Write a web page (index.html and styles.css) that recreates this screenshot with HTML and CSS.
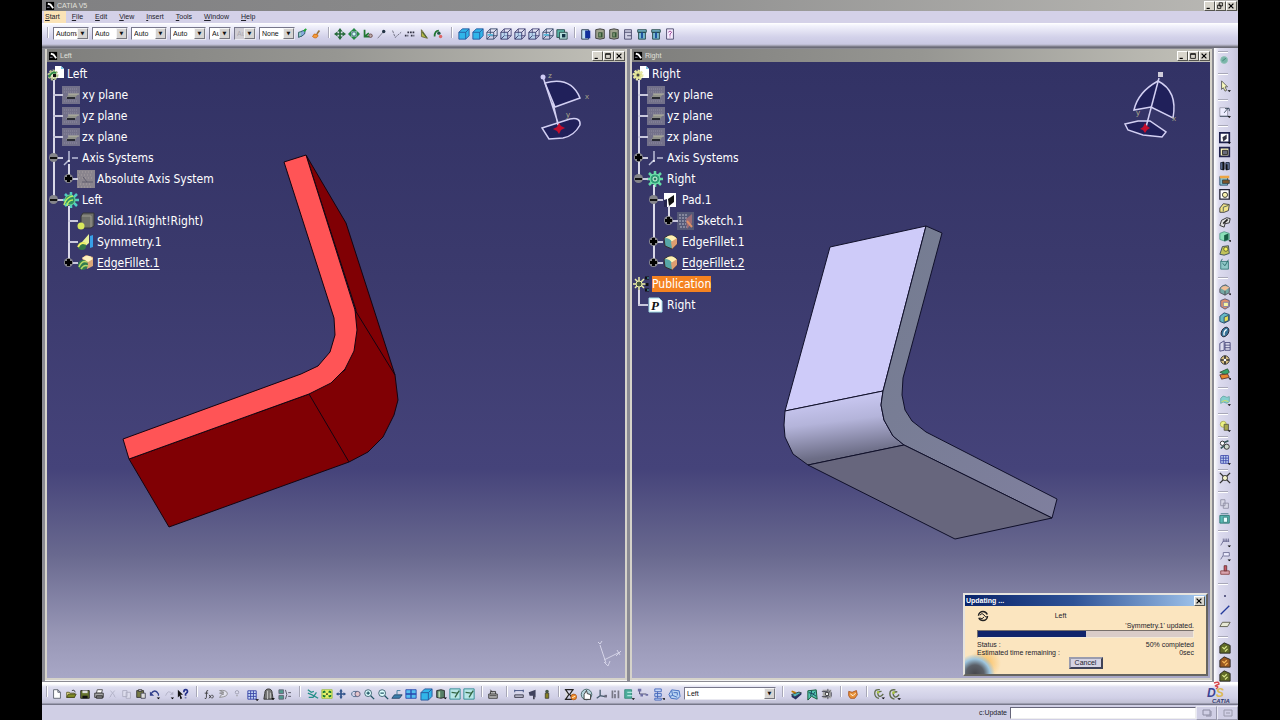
FILE: index.html
```html
<!DOCTYPE html>
<html lang="en">
<head>
<meta charset="utf-8">
<title>CATIA V5</title>
<link rel="stylesheet" href="styles.css">
</head>
<body>
<svg class="defs" aria-hidden="true">
  <defs>
    <linearGradient id="fillet" x1="0.4" y1="0" x2="0.6" y2="1"><stop offset="0" stop-color="#cfcdf8"/><stop offset=".4" stop-color="#b4b4da"/><stop offset=".85" stop-color="#6c6d86"/><stop offset="1" stop-color="#666679"/></linearGradient>
    <linearGradient id="side" x1="0" y1="0" x2="1" y2="1"><stop offset="0" stop-color="#747c90"/><stop offset="1" stop-color="#7f7f9e"/></linearGradient>
  </defs>
  <symbol id="app" viewBox="0 0 10 10"><path fill="#000" d="M0 1h9v9H0z"/><path d="M2 3l3 1 3 4" stroke="#fff" stroke-width="2" fill="none"/><path d="M1 7h3" stroke="#99a"/></symbol>
  <symbol id="link" viewBox="0 0 14 14"><path d="M3 5l4-1v5l-4 2z" fill="#9cc" stroke="#255"/><path d="M6 4l5-2-1 5-4 3" fill="#8ad" stroke="#256"/><path d="M9 4l3-3" stroke="#2a3" stroke-width="2"/></symbol>
  <symbol id="brush" viewBox="0 0 14 14"><path d="M3 10c3 3 7 1 6-2L5 7z" fill="#f49a3c" stroke="#c60"/><path d="M8 7l3-4" stroke="#974" stroke-width="2"/></symbol>
  <symbol id="gmove" viewBox="0 0 14 14"><path d="M7 2v10M2 7h10" stroke="#276b3c" stroke-width="2"/><path d="M7 0l3 4H4zM7 14l3-4H4zM0 7l4-3v6zM14 7l-4-3v6z" fill="#276b3c"/></symbol>
  <symbol id="gmove2" viewBox="0 0 14 14"><path d="M7 0l4 4H3zM7 14l4-4H3zM0 7l4-4v8zM14 7l-4-4v8z" fill="#258a45"/><circle cx="7" cy="7" r="2.500" fill="#cfe" stroke="#357"/></symbol>
  <symbol id="snap" viewBox="0 0 14 14"><path d="M3 2v8h6M3 10l5-4" stroke="#273" fill="none" stroke-width="2"/><circle cx="10" cy="9" r="2" fill="#baa" stroke="#644"/></symbol>
  <symbol id="node" viewBox="0 0 14 14"><path d="M2 12l7-8" stroke="#778"/><circle cx="9" cy="4" r="2" fill="#234"/></symbol>
  <symbol id="dash" viewBox="0 0 14 14"><path d="M3 3l3 8 7-6" stroke="#667" fill="none" stroke-dasharray="3 1"/></symbol>
  <symbol id="span" viewBox="0 0 14 14"><path d="M1 9h4M8 9h4M4 5h8" stroke="#334" stroke-width="2" stroke-dasharray="2 1"/></symbol>
  <symbol id="key" viewBox="0 0 14 14"><path d="M4 2v8l7 2-4-6z" fill="#b6ba45" stroke="#663"/><path d="M5 5l5 6" stroke="#243"/></symbol>
  <symbol id="dots" viewBox="0 0 14 14"><path d="M3 10c0-6 3-7 5-7" stroke="#273" stroke-width="2" fill="none"/><circle cx="8" cy="6" r="2" fill="#254"/><circle cx="10" cy="10" r="2" fill="#d66"/></symbol>
  <symbol id="cube" viewBox="0 0 14 14"><path d="M1 5h8v8H1zM1 5l4-4h8v8l-4 4M9 5l4-4" fill="#31b5e9" stroke="#27579d"/></symbol>
  <symbol id="cubew" viewBox="0 0 14 14"><path d="M5 1h8v8H5z" fill="none" stroke="#447"/><path d="M1 5h8v8H1zM1 5l4-4M9 5l4-4M9 13l4-4M1 13l4-4" fill="#9fd3f0" fill-opacity=".5" stroke="#336"/></symbol>
  <symbol id="cubeo" viewBox="0 0 14 14"><path d="M5 1h8v8H5zM1 5h8v8H1zM1 5l4-4M9 5l4-4M9 13l4-4M1 13l4-4" fill="none" stroke="#346"/><path d="M2 8h6" stroke="#5bd" stroke-width="2"/></symbol>
  <symbol id="iso" viewBox="0 0 14 14"><path d="M1 2h9v9H1z" fill="#5bb9a9" stroke="#244"/><path d="M4 5h9v8H4z" fill="#b5ddda" stroke="#244"/><path d="M7 7h4v4H7z" fill="#134"/></symbol>
  <symbol id="cylb" viewBox="0 0 14 14"><path d="M2 2h8v11H2z" fill="#bfe0f2" stroke="#234"/><path d="M6 3h6v9H6z" fill="#12309b"/></symbol>
  <symbol id="cylg" viewBox="0 0 14 14"><path d="M2 2l5-1 5 1v10l-5 1-5-1z" fill="#9ea28e" stroke="#333"/><path d="M5 5h5v6H5z" fill="#353"/><path d="M7 6v4" stroke="#cdb"/></symbol>
  <symbol id="cylw" viewBox="0 0 14 14"><path d="M3 2h8v11H3zM3 5h8M6 9h5" fill="#cfcfe4" stroke="#446"/></symbol>
  <symbol id="cylc" viewBox="0 0 14 14"><path d="M2 2h10v3H2zM3 5h8v8H3z" fill="#78b9ce" stroke="#244"/><path d="M7 5v7" stroke="#14469a" stroke-width="2"/></symbol>
  <symbol id="help" viewBox="0 0 14 14"><path d="M3 1h8v12H3z" fill="#f6ecff" stroke="#446"/><path d="M5 5q2-3 4 0l-2 2v2M7 10v1" stroke="#93368a" fill="none"/></symbol>
  <symbol id="page" viewBox="0 0 14 14"><path d="M3 2h5l3 3v7H3zM8 2v3h3" fill="#fff" stroke="#555b68"/></symbol>
  <symbol id="open" viewBox="0 0 14 14"><path d="M2 11V5h3l1 1h5v5z" fill="#f8ee96" stroke="#552"/><path d="M2 11l2-4h9l-2 4z" fill="#808c24" stroke="#442"/><path d="M8 3q3-2 4 2" fill="none" stroke="#333"/></symbol>
  <symbol id="save" viewBox="0 0 14 14"><path d="M2 3h10v9H2z" fill="#67752e" stroke="#222"/><path d="M4 3h6v3H4z" fill="#ddd"/><path d="M4 9h6v3H4z" fill="#111"/></symbol>
  <symbol id="print" viewBox="0 0 14 14"><path d="M5 2h6l-1 4H4z" fill="#fff" stroke="#444"/><path d="M2 6h10v5H2z" fill="#aaa" stroke="#333"/><path d="M4 9h7v3H4z" fill="#777" stroke="#333"/></symbol>
  <symbol id="cut" viewBox="0 0 14 14"><path d="M4 3l5 6M9 3L4 9M3 11l2-2M10 11L8 9" stroke="#b0b0c4" fill="none"/></symbol>
  <symbol id="copy" viewBox="0 0 14 14"><path d="M2 3h5v7H2zM6 5h5v7H6z" fill="#dddded" stroke="#acacc0"/></symbol>
  <symbol id="paste" viewBox="0 0 14 14"><path d="M2 3h8v8H2z" fill="#767a46" stroke="#333"/><path d="M4 2h4v2H4z" fill="#ccc" stroke="#333"/><path d="M7 6h5v6H7z" fill="#ddd" stroke="#445"/></symbol>
  <symbol id="undo" viewBox="0 0 14 14"><path d="M2 7q5-7 9 0v2" fill="none" stroke="#313f8b" stroke-width="1.5"/><path d="M1 4v5h5z" fill="#313f8b"/><path d="M9 11h4l-2 2z"/></symbol>
  <symbol id="redo" viewBox="0 0 14 14"><path d="M3 9q3-8 8-2" fill="none" stroke="#b0b0c4"/><path d="M12 4v4H8z" fill="#b0b0c4"/><path d="M9 11h4l-2 2z"/></symbol>
  <symbol id="what" viewBox="0 0 14 14"><path d="M1 2l6 6H4l2 4-2 1-1-4-2 2z" fill="#111"/><path d="M8 5q0-3 2-3 3 0 2 3l-2 2v2M10 11v1" stroke="#24318a" stroke-width="2" fill="none"/></symbol>
  <symbol id="fx" viewBox="0 0 14 14"><path d="M6 3q-2-1-2 3v5q0 2-2 1M2 6h4M7 8l3 4M10 8l-3 4M11 8q2 2 0 4" stroke="#333" fill="none"/></symbol>
  <symbol id="msg" viewBox="0 0 14 14"><path d="M3 3q8-1 9 3t-9 5l2-3 3-1-5-1 5-1z" fill="#e3e3ee" stroke="#888"/></symbol>
  <symbol id="bulb" viewBox="0 0 14 14"><circle cx="7" cy="5" r="2" fill="#dde" stroke="#9a9aad"/><path d="M6 9h2" stroke="#999"/></symbol>
  <symbol id="grid" viewBox="0 0 14 14"><path d="M2 3h9v9H2z" fill="#c9dcf7"/><path d="M2 3v9M5 3v9M8 3v9M11 3v9M2 3h9M2 6h9M2 9h9M2 12h9" stroke="#3944a8"/><path d="M10 12h4l-2 2z"/></symbol>
  <symbol id="lock" viewBox="0 0 14 14"><path d="M3 6q0-5 4-5t4 5l1 6H2z" fill="#777" stroke="#333"/><path d="M6 3v9M9 5v6" stroke="#ccc"/><path d="M10 11h4l-2 2z"/></symbol>
  <symbol id="law" viewBox="0 0 14 14"><path d="M1 2h5v4H1zM1 8h5v4H1z" fill="#51988e" stroke="#667"/><path d="M8 2q3 5 0 10M11 5h3M11 9h3" fill="none" stroke="#556"/></symbol>
  <symbol id="fly" viewBox="0 0 14 14"><path d="M1 2l4 3 3-1M1 6l5 2 7 4M2 11h5l4-6" stroke="#27908a" stroke-width="1.5" fill="none"/></symbol>
  <symbol id="fit" viewBox="0 0 14 14"><path d="M1 2h12v10H1z" fill="#e7f26a" stroke="#9b4"/><path d="M4 3L2 4v2l4-1zM10 3l2 1v2L8 5zM4 11l-2-1V8l4 1zM10 11l2-1V8L8 9z" fill="#173"/><circle cx="7" cy="7" r="1"/></symbol>
  <symbol id="pan" viewBox="0 0 14 14"><path d="M7 3v8M3 7h8" stroke="#31548b" stroke-width="2"/><path d="M7 1l2 3H5zM7 13l2-3H5zM1 7l3-2v4zM13 7l-3-2v4z" fill="#31548b"/></symbol>
  <symbol id="rot" viewBox="0 0 14 14"><path d="M10 4H5q-4 3 0 6h5" stroke="#468" fill="none"/><circle cx="10" cy="7" r="3" fill="#e5c5cb" stroke="#557"/></symbol>
  <symbol id="zin" viewBox="0 0 14 14"><circle cx="6" cy="6" r="4" fill="#dff" stroke="#356"/><path d="M9 9l4 4M4 6h4M6 4v4" stroke="#256" stroke-width="1.5"/></symbol>
  <symbol id="zout" viewBox="0 0 14 14"><circle cx="6" cy="6" r="4" fill="#dff" stroke="#356"/><path d="M9 9l4 4M4 6h4" stroke="#256" stroke-width="1.5"/></symbol>
  <symbol id="norm" viewBox="0 0 14 14"><path d="M1 12l3-4h9l-3 4z" fill="#3a7fac" stroke="#246"/><path d="M7 9V3h4" stroke="#379" fill="none"/></symbol>
  <symbol id="multi" viewBox="0 0 14 14"><path d="M1 2h12v10H1z" fill="#55bff0" stroke="#2846ac"/><path d="M7 2v10M1 7h12" stroke="#2846ac" stroke-width="1.500"/></symbol>
  <symbol id="cyld" viewBox="0 0 14 14"><path d="M2 3l5-1 4 1v8l-4 1-5-1z" fill="#557e66" stroke="#222"/><path d="M5 4v7" stroke="#bbd8b0" stroke-width="2"/><path d="M10 11h4l-2 2z"/></symbol>
  <symbol id="hide" viewBox="0 0 14 14"><path d="M1 1h12v12H1z" fill="#b7e6e6" stroke="#27858e"/><path d="M3 5l7 1-3 5M10 6l2-3" stroke="#364" stroke-width="1.500" fill="none"/></symbol>
  <symbol id="cam" viewBox="0 0 14 14"><path d="M2 7h10v5H2zM4 7V4h6v3" fill="#bbb" stroke="#333"/><path d="M4 2l2 3M3 9h8" stroke="#333"/></symbol>
  <symbol id="meas" viewBox="0 0 14 14"><path d="M2 3h10M2 5V2M12 5V2" stroke="#347" fill="none"/><path d="M2 8h10v3H2z" fill="#bbc" stroke="#334"/></symbol>
  <symbol id="horn" viewBox="0 0 14 14"><path d="M2 5l8-3v9L7 9H3z" fill="#41435d"/><path d="M8 9v4" stroke="#445" stroke-width="2"/></symbol>
  <symbol id="man" viewBox="0 0 14 14"><circle cx="7" cy="4" r="2" fill="#454"/><path d="M5 6h4v6H5z" fill="#89811f" stroke="#443"/></symbol>
  <symbol id="hour" viewBox="0 0 16 16"><path d="M1 2h11M1 14h9M2 2l4 6-4 6M11 2L7 8l3 4" stroke="#222" stroke-width="1.5" fill="#ddd"/><circle cx="12" cy="11" r="3.500" fill="#ee8d27" stroke="#a52"/><path d="M10 12l4-2" stroke="#fff"/></symbol>
  <symbol id="hand" viewBox="0 0 16 16"><circle cx="8" cy="8" r="6.500" fill="#b6d5dd" stroke="#355"/><path d="M5 14V8l3-5 1 4 4 1v6z" fill="#fff" stroke="#222"/></symbol>
  <symbol id="axis" viewBox="0 0 14 14"><path d="M6 2v7l6 1M6 9l-4 3" fill="none" stroke="#44596b" stroke-width="1.500"/><path d="M11 8h3v3h-3z" fill="#6a6a7c"/></symbol>
  <symbol id="bars" viewBox="0 0 14 14"><path d="M4 3v9M7 3v2m0 2v5M11 3v9" stroke="#777785" stroke-width="2"/></symbol>
  <symbol id="gbox" viewBox="0 0 14 14"><path d="M2 2h8v10H2z" fill="#4cae9c" stroke="#387"/><path d="M5 5h6M5 9h6" stroke="#dff"/><path d="M10 12h4l-2 2z"/></symbol>
  <symbol id="branch" viewBox="0 0 14 14"><path d="M3 3v4h8" stroke="#446" fill="none"/><path d="M1 1h4v3H1zM4 7h3v3H4zM10 7h3v2h-3z" fill="#6e6fa5"/></symbol>
  <symbol id="tree" viewBox="0 0 14 14"><path d="M3 1h7v3H3zM3 6h7v3H3zM3 11h7v2H3zM6 4v7" fill="#c7d9f8" stroke="#4668bb"/><path d="M11 11h4l-2 2z"/></symbol>
  <symbol id="body" viewBox="0 0 14 14"><path d="M4 2l8 1 1 6-3 3-7-1-2-4z" fill="#b9d4f3" stroke="#426dbd"/><path d="M4 3l1 5 5 2M5 8l-3 1M6 5h4v3" fill="none" stroke="#426dbd"/></symbol>
  <symbol id="block" viewBox="0 0 16 16"><path d="M2 8l9-3 3 1-8 5z" fill="#50b3bb" stroke="#233"/><path d="M2 8v3l5 3 7-6V6l-8 5z" fill="#252f62"/><path d="M2 4l5 2" stroke="#b70" stroke-width="2"/></symbol>
  <symbol id="web" viewBox="0 0 14 14"><path d="M2 3l9-1 1 10-6-3-4 4z" fill="#55c7b1" stroke="#153"/><path d="M3 5l4 1 4 3M6 3l-1 6M10 4L7 8" stroke="#113d55" fill="none"/></symbol>
  <symbol id="star" viewBox="0 0 14 14"><path d="M2 2h10v10H2z" fill="#aaa"/><path d="M1 4h6M1 10h6M8 1v12M4 4l6 6M11 3l-6 8M12 5v5" stroke="#454554"/><circle cx="7" cy="7" r="2" fill="#eee" stroke="#333"/></symbol>
  <symbol id="mug" viewBox="0 0 14 14"><path d="M2 4l4 1 5-2 1 5-3 4H4L2 9z" fill="#e89239" stroke="#a74e18"/><path d="M4 7l3 2 3-3" stroke="#fff" fill="none"/></symbol>
  <symbol id="coil" viewBox="0 0 14 14"><path d="M8 2q-6-1-6 4t5 6M10 4Q4 4 6 8t6-1" fill="none" stroke="#606d4d" stroke-width="1.500"/><circle cx="6" cy="5" r="1.500" fill="#a9c541"/><path d="M10 11h4l-2 2z"/></symbol>
  <symbol id="gdot" viewBox="0 0 14 14"><circle cx="6" cy="7" r="4" fill="#79b4a9" stroke="#8fc2b5"/><path d="M4 8l4-3" stroke="#398270"/></symbol>
  <symbol id="cursor" viewBox="0 0 14 14"><path d="M3 1l7 7H7l2 4-2 1-2-4-2 2z" fill="#f8f9bd" stroke="#555"/><path d="M10 12h4l-2 2z"/></symbol>
  <symbol id="sketch" viewBox="0 0 14 14"><path d="M1 2h9v10H1z" fill="#eef" stroke="#99a"/><path d="M1 12h11M6 8l5-6M7 3h5v3" stroke="#345" fill="none"/><path d="M10 12h4l-2 2z"/></symbol>
  <symbol id="pad" viewBox="0 0 14 14"><path d="M1 1h11v11H1z" fill="#fff" stroke="#1c1f4b" stroke-width="2"/><path d="M4 6l5-3v5l-4 3z" fill="#334"/><path d="M10 12h4l-2 2z"/></symbol>
  <symbol id="pocket" viewBox="0 0 14 14"><path d="M1 2h11v10H1z" fill="#fff9be" stroke="#20224c" stroke-width="2"/><path d="M4 5h6v5H4z" fill="#686a7a" stroke="#222"/></symbol>
  <symbol id="shaft" viewBox="0 0 14 14"><path d="M2 3h4v8H2zM8 3h4v8H8z" fill="#65779d" stroke="#172139"/><path d="M5 2v10M9 5v7" stroke="#111" stroke-width="2"/></symbol>
  <symbol id="groove" viewBox="0 0 14 14"><path d="M1 3h9v10H1z" fill="#8bc3cf" stroke="#246"/><path d="M1 2h11v3H1z" fill="#eda544"/><path d="M4 7h8v4H4z" fill="#7d552b" stroke="#344"/></symbol>
  <symbol id="hole" viewBox="0 0 14 14"><path d="M1 2h11v11H1z" fill="#fff" stroke="#223" stroke-width="1.500"/><circle cx="7" cy="8" r="3" fill="#f8f1ad" stroke="#222"/></symbol>
  <symbol id="rib" viewBox="0 0 14 14"><path d="M1 12V7l4-5 7 1-1 7-5 2z" fill="#f1e38a" stroke="#333"/><path d="M5 11V6l6-2" stroke="#455" fill="none"/></symbol>
  <symbol id="slot" viewBox="0 0 14 14"><path d="M1 11l2-6 6-3 4 1-1 5-5 1-1 4z" fill="#dfdfdf" stroke="#222"/><path d="M5 9l5-5" stroke="#222" stroke-width="2"/></symbol>
  <symbol id="gcube" viewBox="0 0 14 14"><path d="M1 4l5-2 6 2v7l-5 2-6-2z" fill="#8ae0b8" stroke="#598"/><path d="M6 6l5-2v7l-5 2z" fill="#185c44"/><path d="M11 12h4l-2 2z"/></symbol>
  <symbol id="ycube" viewBox="0 0 14 14"><path d="M1 12l3-9 7-1 1 9-6 2z" fill="#c1c25a" stroke="#345"/><circle cx="8" cy="6" r="2.500" fill="#f8f55b" stroke="#553"/></symbol>
  <symbol id="tcube" viewBox="0 0 14 14"><path d="M2 4h9v9H2z" fill="#8fc7c7" stroke="#377"/><path d="M4 6l3 3 4-7M2 4l2-3" stroke="#266" fill="none"/></symbol>
  <symbol id="fil" viewBox="0 0 14 14"><path d="M1 6q1-4 7-5l4 3v6l-5 3-6-3z" fill="#75a9a5" stroke="#53505e"/><path d="M2 5q4-5 10-1L7 8z" fill="#f2be95"/><path d="M7 8v5" stroke="#444"/><path d="M11 11h4l-2 2z"/></symbol>
  <symbol id="cham" viewBox="0 0 14 14"><path d="M2 3l5-2 5 2v7l-5 3-5-3z" fill="#e0916b" stroke="#557"/><path d="M5 5h6v5H5z" fill="#f7f3a0" stroke="#77a"/></symbol>
  <symbol id="draft" viewBox="0 0 14 14"><path d="M1 5l5-4 6 2v7l-6 3-5-2z" fill="#67b9c3" stroke="#246"/><path d="M6 6l5-2v6l-5 2z" fill="#e8df55" stroke="#246"/></symbol>
  <symbol id="shell" viewBox="0 0 14 14"><ellipse cx="7" cy="7" rx="4" ry="6" fill="#37759a" stroke="#223" transform="rotate(30 7 7)"/><path d="M6 11q-1-5 3-7" stroke="#fff" fill="none" stroke-width="1.500"/></symbol>
  <symbol id="thick" viewBox="0 0 14 14"><path d="M1 4l5-3v11l-5 1zM7 3h6v9H7zM7 6h6M7 9h6" fill="#dde" stroke="#447"/></symbol>
  <symbol id="thread" viewBox="0 0 14 14"><circle cx="7" cy="7" r="5" fill="#d8bf80" stroke="#333"/><path d="M7 2v10M2 7h10" stroke="#333" stroke-width="2"/><circle cx="7" cy="7" r="1.500" fill="#fff"/></symbol>
  <symbol id="repl" viewBox="0 0 14 14"><path d="M1 5l9-4 2 4-4 3z" fill="#36a46c" stroke="#353"/><path d="M1 8l9-1 2 4-9 2z" fill="#e8872e" stroke="#533"/><path d="M11 12h4l-2 2z"/></symbol>
  <symbol id="surf" viewBox="0 0 14 14"><path d="M2 5q3-4 5-2t5 0v6q-3 3-5 1t-5 1z" fill="#85cfd0" stroke="#68a7a4"/><path d="M3 9q4-3 8 0" stroke="#dd5" fill="none"/><path d="M10 12h4l-2 2z"/></symbol>
  <symbol id="bool" viewBox="0 0 14 14"><circle cx="5" cy="5" r="3.500" fill="#eef484" stroke="#aa5"/><path d="M6 5h5v7H6z" fill="#a8a84d" stroke="#554"/><path d="M10 12h4l-2 2z"/></symbol>
  <symbol id="balls" viewBox="0 0 14 14"><circle cx="4" cy="5" r="2.500" fill="#fff" stroke="#222"/><circle cx="9" cy="9" r="3" fill="#cdd9cb" stroke="#222"/><path d="M6 4l5-2M2 11l4-3" stroke="#355" stroke-width="2"/></symbol>
  <symbol id="scale" viewBox="0 0 14 14"><circle cx="7" cy="7" r="3" fill="#f4f3c6" stroke="#333"/><path d="M1 1l4 4M13 1L9 5M1 13l4-4M13 13L9 9" stroke="#333" stroke-width="1.500"/></symbol>
  <symbol id="boxes" viewBox="0 0 14 14"><path d="M2 2h5v7H2zM5 6h6v6H5z" fill="#d7d7e6" stroke="#8d8da3"/></symbol>
  <symbol id="tbox" viewBox="0 0 14 14"><path d="M1 4h11v9H1z" fill="#59b8b4" stroke="#28736e"/><path d="M5 6h5v6H5z" fill="#e6ffff" stroke="#377"/><path d="M2 2h9" stroke="#478"/></symbol>
  <symbol id="note" viewBox="0 0 14 14"><path d="M2 11l3-5h7M5 3v4M7 3v4M9 3v4M11 3v4" stroke="#67678f" fill="none"/><path d="M10 11h4l-2 2z"/></symbol>
  <symbol id="flag" viewBox="0 0 14 14"><path d="M2 11l3-5V3h7v4H5" stroke="#67678f" fill="#eef"/><path d="M10 11h4l-2 2z"/></symbol>
  <symbol id="stamp" viewBox="0 0 14 14"><path d="M2 8h10v4H2z" fill="#d9a4ae" stroke="#844"/><path d="M6 2h3v6H6z" fill="#c56" stroke="#633"/></symbol>
  <symbol id="point" viewBox="0 0 14 14"><path d="M6 6h2v2H6z" fill="#225"/></symbol>
  <symbol id="line" viewBox="0 0 14 14"><path d="M2 12L12 2" stroke="#233a9b" stroke-width="1.500"/></symbol>
  <symbol id="plane" viewBox="0 0 14 14"><path d="M1 10l3-5h9l-3 5z" fill="#e7e9d5" stroke="#554"/></symbol>
  <symbol id="rock" viewBox="0 0 14 14"><path d="M1 13V5l5-4 7 3v9z" fill="#606a28" stroke="#222"/><path d="M4 6l2 2 3-3M7 11l3-3" stroke="#d9e68a" stroke-width="1.500" fill="none"/></symbol>
  <symbol id="rocko" viewBox="0 0 14 14"><path d="M1 13V5l5-4 7 3v9z" fill="#9a5921" stroke="#222"/><path d="M4 6l2 2 3-3M7 11l3-3" stroke="#f9b95a" stroke-width="1.500" fill="none"/></symbol>
  <symbol id="minimize" viewBox="0 0 10 10"><path d="M2 8h4" stroke="#000" stroke-width="1.500"/></symbol>
  <symbol id="maximize" viewBox="0 0 10 10"><path d="M2 2h6v6H2zM2 3h6" stroke="#000" fill="none"/></symbol>
  <symbol id="restore" viewBox="0 0 10 10"><path d="M4 1h4v4H4zM2 4h4v4H2z" stroke="#000" fill="#d8d5cc"/></symbol>
  <symbol id="close" viewBox="0 0 10 10"><path d="M2 2l6 6M8 2L2 8" stroke="#000" stroke-width="1.500"/></symbol>
  <symbol id="t-part" viewBox="0 0 18 18"><path d="M8 1h6l3 3v9H8z" fill="#fff"/><path d="M14 1v3h3" fill="#7ecbe8"/><circle cx="6" cy="10" r="4" fill="#d9dc8a" stroke="#e9e8a6" stroke-width="3" stroke-dasharray="2 1"/><circle cx="6" cy="10" r="1.500" fill="#444"/></symbol>
  <symbol id="t-partg" viewBox="0 0 18 18"><path d="M8 1h6l3 3v9H8z" fill="#fff"/><path d="M14 1v3h3" fill="#7ecbe8"/><circle cx="6" cy="10" r="4" fill="#e5e5c2" stroke="#b5c58c" stroke-width="3" stroke-dasharray="2 1"/><path d="M2 12q3-6 7-4" stroke="#2a8a43" stroke-width="2" fill="none"/><path d="M6 9h3v3H6z" fill="#111"/></symbol>
  <symbol id="t-plane" viewBox="0 0 18 18"><path d="M0 0h18v18H0z" fill="#73718a"/><path d="M2 3h14M2 6h14M2 15h14" stroke="#8e8b9e" stroke-dasharray="1 1"/><path d="M4 12l3-4h9l-3 4z" fill="#90928a"/><path d="M5 12h8" stroke="#292b33" stroke-width="2"/><path d="M6 8h11" stroke="#b9b9a6"/></symbol>
  <symbol id="t-axes" viewBox="0 0 18 18"><path d="M7 2v9l-5 5M10 9h6" stroke="#bcbfd8" stroke-width="1.500" fill="none"/><circle cx="7" cy="12" r="1" fill="#fff"/></symbol>
  <symbol id="t-hidden" viewBox="0 0 18 18"><path d="M0 0h18v18H0z" fill="#8a858e"/><path d="M2 2h14M1 5h14M2 8h14M3 14h12M1 17h14" stroke="#a8a0a2" stroke-dasharray="1 2"/><path d="M5 12h11M6 7l4 5" stroke="#5f5d6c"/></symbol>
  <symbol id="t-gear" viewBox="0 0 18 18"><path d="M8 1v16M0 9h16M2 3l12 12M14 3L2 15" stroke="#63dba6" stroke-width="2.500"/><circle cx="8" cy="9" r="5" fill="#2f9c75" stroke="#7feeb6"/><circle cx="8" cy="9" r="2" fill="#2f7c65" stroke="#d7ffe7"/></symbol>
  <symbol id="t-bodyg" viewBox="0 0 18 18"><path d="M9 1v16M1 9h16M3 3l12 12M15 3L3 15" stroke="#4fcdc4" stroke-width="2.500"/><circle cx="8" cy="9" r="5" fill="#2e8d62" stroke="#6fd892"/><path d="M2 14q2-8 9-9M5 15q1-6 6-6" stroke="#b8ee62" stroke-width="1.500" fill="none"/></symbol>
  <symbol id="t-solid" viewBox="0 0 18 18"><path d="M4 4l2-3h11v13l-3 2H4z" fill="#6e6f69" stroke="#33343a"/><path d="M5 4h9v11" stroke="#9c9c90" fill="none"/><circle cx="4" cy="14" r="3.500" fill="#d8e85c"/></symbol>
  <symbol id="t-sym" viewBox="0 0 18 18"><path d="M5 9l7-8v9l-6 5z" fill="#e9f19b"/><path d="M13 3l3-1v12l-3 1z" fill="#38a0e8"/><circle cx="5" cy="13" r="4" fill="#367749"/><path d="M1 14q3-6 8-3" stroke="#f1ef69" stroke-width="2" fill="none"/></symbol>
  <symbol id="t-fillet" viewBox="0 0 18 18"><path d="M2 5l5-3 7 2 1 7-5 5-7-3z" fill="#57a6a7" stroke="#382e2e"/><path d="M3 5q7-6 12 1l-5 3Q8 5 3 5z" fill="#fff0b2"/><path d="M9 9l6-4v6l-5 5z" fill="#de9d71"/></symbol>
  <symbol id="t-filletg" viewBox="0 0 18 18"><path d="M5 4l4-3 7 2v9l-6 3z" fill="#dca777"/><path d="M5 4q7-5 11 1l-5 3z" fill="#fff3bf"/><circle cx="6" cy="11" r="5" fill="#317b50"/><path d="M2 13q3-7 8-5M4 15q3-5 7-3" stroke="#b9d866" stroke-width="1.500" fill="none"/></symbol>
  <symbol id="t-pad" viewBox="0 0 18 18"><path d="M2 2h12v14H2z" fill="#fff"/><path d="M6 8l6-4v7l-5 4z" fill="#111"/><path d="M2 16V9l3-1v8z" fill="#26264f"/></symbol>
  <symbol id="t-sketch" viewBox="0 0 18 18"><path d="M0 0h17v18H0z" fill="#555977"/><path d="M2 3h8M2 6h9M2 9h8M2 12h7M3 15h9" stroke="#b7b8c7" stroke-dasharray="2 1"/><path d="M9 7l6-5v9l-5 6z" fill="#9a6b76"/><path d="M10 9l5 6" stroke="#de8f66" stroke-width="2"/></symbol>
  <symbol id="t-pub" viewBox="0 0 18 18"><path d="M7 2v13M1 9h13M3 4l9 9M12 4l-9 9" stroke="#eceda8" stroke-width="1.500"/><circle cx="7" cy="9" r="3" fill="#45573d" stroke="#eceda8"/><path d="M13 3h4M13 15h4M15 8v3" stroke="#111" stroke-width="3"/><path d="M15 3h2M15 15h2" stroke="#5bd"/></symbol>
</svg>

<div class="app">
  <header class="titlebar main-title">
    <svg class="app-icon"><use href="#app"/></svg><h1>CATIA V5</h1>
    <div class="winbuttons"><button aria-label="Minimize"><svg><use href="#minimize"/></svg></button><button aria-label="Restore"><svg><use href="#restore"/></svg></button><button aria-label="Close"><svg><use href="#close"/></svg></button></div>
  </header>
  <nav class="menubar">
    <button class="active"><u>S</u>tart</button><button><u>F</u>ile</button><button><u>E</u>dit</button><button><u>V</u>iew</button><button><u>I</u>nsert</button><button><u>T</u>ools</button><button><u>W</u>indow</button><button><u>H</u>elp</button>
  </nav>

  <div class="toolbar top" role="toolbar" aria-label="Graphic properties and view">
    <i class="sep s10"></i>
    <div class="combos">
      <span class="combo w36"><select aria-label="Fill color"><option>Automat</option></select></span>
      <span class="combo w36"><select aria-label="Transparency"><option>Auto</option></select></span>
      <span class="combo w36"><select aria-label="Line weight"><option>Auto</option></select></span>
      <span class="combo w36"><select aria-label="Line type"><option>Auto</option></select></span>
      <span class="combo w22"><select aria-label="Point symbol"><option>Aut</option></select></span>
      <span class="combo w22"><select aria-label="Rendering" disabled><option>Aut</option></select></span>
      <span class="combo w36"><select aria-label="Layer"><option>None</option></select></span>
    </div>
    <button class="tool" aria-label="Painter"><svg><use href="#link"/></svg></button><button class="tool" aria-label="Wizard"><svg><use href="#brush"/></svg></button>
    <i class="sep s10"></i>
    <button class="tool" aria-label="Translate"><svg><use href="#gmove"/></svg></button><button class="tool" aria-label="Rotate"><svg><use href="#gmove2"/></svg></button><button class="tool" aria-label="Snap"><svg><use href="#snap"/></svg></button><button class="tool" aria-label="Attach"><svg><use href="#node"/></svg></button><button class="tool" aria-label="Path"><svg><use href="#dash"/></svg></button><button class="tool" aria-label="Span"><svg><use href="#span"/></svg></button><button class="tool" aria-label="Key"><svg><use href="#key"/></svg></button><button class="tool" aria-label="Points"><svg><use href="#dots"/></svg></button>
    <i class="sep s12"></i>
    <button class="tool" aria-label="Isometric"><svg><use href="#cube"/></svg></button><button class="tool" aria-label="Front"><svg><use href="#cube"/></svg></button><button class="tool" aria-label="Back"><svg><use href="#cubeo"/></svg></button><button class="tool" aria-label="Left view"><svg><use href="#cubew"/></svg></button><button class="tool" aria-label="Right view"><svg><use href="#cubew"/></svg></button><button class="tool" aria-label="Top"><svg><use href="#cubew"/></svg></button><button class="tool" aria-label="Bottom"><svg><use href="#cubeo"/></svg></button><button class="tool" aria-label="Named views"><svg><use href="#iso"/></svg></button>
    <i class="sep s10"></i>
    <button class="tool" aria-label="Shading"><svg><use href="#cylb"/></svg></button><button class="tool" aria-label="Shading with edges"><svg><use href="#cylg"/></svg></button><button class="tool" aria-label="Hidden edges"><svg><use href="#cylg"/></svg></button><button class="tool" aria-label="Wireframe"><svg><use href="#cylw"/></svg></button><button class="tool" aria-label="Material"><svg><use href="#cylc"/></svg></button><button class="tool" aria-label="Customize"><svg><use href="#cylc"/></svg></button><button class="tool" aria-label="Help on view"><svg><use href="#help"/></svg></button>
  </div>

  <main class="workspace">
    <div class="windows">
      <section class="window">
        <header class="titlebar"><svg class="app-icon"><use href="#app"/></svg><h2>Left</h2>
          <div class="winbuttons"><button aria-label="Minimize"><svg><use href="#minimize"/></svg></button><button aria-label="Maximize"><svg><use href="#maximize"/></svg></button><button aria-label="Close"><svg><use href="#close"/></svg></button></div>
        </header>
        <div class="canvas">
          <svg class="model" viewBox="47 62 578 616" preserveAspectRatio="xMinYMin meet">
            <g stroke="#140410" stroke-linejoin="round">
              <path fill="#800004" d="M306 155L346 223 395 375 398 400 394 415 383 437 368 452 349 462 169 527 129 459 309 394 345 370 356 310z"/>
              <path fill="#ff5456" d="M284 162L306 155 355 310 357 330 354 351 345 369 331 383 309 394 129 459 123 439 301 374 318 366 330 352 335 335 334 318z"/>
              <path fill="none" d="M309 394L349 462M355 310L395 375"/>
            </g>
          </svg>
          <ul class="tree">
            <li><div class="row"><svg><use href="#t-partg"/></svg><span>Left</span></div>
              <ul>
                <li><div class="row"><svg><use href="#t-plane"/></svg><span>xy plane</span></div></li>
                <li><div class="row"><svg><use href="#t-plane"/></svg><span>yz plane</span></div></li>
                <li><div class="row"><svg><use href="#t-plane"/></svg><span>zx plane</span></div></li>
                <li><button class="exp" aria-label="Collapse"></button><div class="row"><svg><use href="#t-axes"/></svg><span>Axis Systems</span></div>
                  <ul><li><button class="exp plus" aria-label="Expand"></button><div class="row"><svg><use href="#t-hidden"/></svg><span>Absolute Axis System</span></div></li></ul>
                </li>
                <li><button class="exp" aria-label="Collapse"></button><div class="row"><svg><use href="#t-bodyg"/></svg><span>Left</span></div>
                  <ul>
                    <li><div class="row"><svg><use href="#t-solid"/></svg><span>Solid.1(Right!Right)</span></div></li>
                    <li><div class="row"><svg><use href="#t-sym"/></svg><span>Symmetry.1</span></div></li>
                    <li><button class="exp plus" aria-label="Expand"></button><div class="row"><svg><use href="#t-filletg"/></svg><span class="current">EdgeFillet.1</span></div></li>
                  </ul>
                </li>
              </ul>
            </li>
          </ul>
          <svg class="compass" viewBox="535 67 60 77">
            <g fill="#20205a" stroke="#d3d0f3" stroke-width="1.500">
              <path d="M545 83Q571 76 580 98L555 107z"/><path d="M542 128L570 119Q581 117 580 125 574 136 563 138L549 139z"/>
              <path d="M543 77L559 126M553 103L558 125" fill="none"/></g>
            <circle cx="543" cy="77" r="2.500" fill="#cfcbf5"/><path fill="#c50d2c" d="M559 123l2 3 4 2-4 2-2 4-2-3-4-2 4-2z"/>
            <text x="548" y="78">z</text><text x="585" y="99">x</text><text x="566" y="117">y</text>
          </svg>
          <svg class="triad" viewBox="594 640 30 30"><path d="M600 645l6 18M604 660l14-7M598 642l2 2 2-3M617 650l3 5M616 656l5-5M604 662l4 4 2-5" stroke="#d5d4e8" fill="none"/></svg>
        </div>
      </section>

      <section class="window">
        <header class="titlebar"><svg class="app-icon"><use href="#app"/></svg><h2>Right</h2>
          <div class="winbuttons"><button aria-label="Minimize"><svg><use href="#minimize"/></svg></button><button aria-label="Maximize"><svg><use href="#maximize"/></svg></button><button aria-label="Close"><svg><use href="#close"/></svg></button></div>
        </header>
        <div class="canvas">
          <svg class="model" viewBox="632 62 578 616" preserveAspectRatio="xMinYMin meet">
            <g stroke="#10102a" stroke-linejoin="round">
              <path fill="#cecbf9" d="M830 247L926 226 883 391 785 411z"/>
              <path fill="url(#fillet)" d="M785 411L883 391 881 405 884 420 893 436 904 445 808 465 793 454 785 437 784 425z"/>
              <path fill="url(#side)" d="M926 226L942 233 903 378 902 395 905 410 912 421 926 432 1057 499 1052 518 904 445 893 436 884 420 881 405 883 391z"/>
              <path fill="#67667d" d="M808 465L904 445 1052 518 955 539z"/>
            </g>
          </svg>
          <ul class="tree">
            <li><div class="row"><svg><use href="#t-part"/></svg><span>Right</span></div>
              <ul>
                <li><div class="row"><svg><use href="#t-plane"/></svg><span>xy plane</span></div></li>
                <li><div class="row"><svg><use href="#t-plane"/></svg><span>yz plane</span></div></li>
                <li><div class="row"><svg><use href="#t-plane"/></svg><span>zx plane</span></div></li>
                <li><button class="exp plus" aria-label="Expand"></button><div class="row"><svg><use href="#t-axes"/></svg><span>Axis Systems</span></div></li>
                <li><button class="exp" aria-label="Collapse"></button><div class="row"><svg><use href="#t-gear"/></svg><span>Right</span></div>
                  <ul>
                    <li><button class="exp" aria-label="Collapse"></button><div class="row"><svg><use href="#t-pad"/></svg><span>Pad.1</span></div>
                      <ul><li><button class="exp plus" aria-label="Expand"></button><div class="row"><svg><use href="#t-sketch"/></svg><span>Sketch.1</span></div></li></ul>
                    </li>
                    <li><button class="exp plus" aria-label="Expand"></button><div class="row"><svg><use href="#t-fillet"/></svg><span>EdgeFillet.1</span></div></li>
                    <li><button class="exp plus" aria-label="Expand"></button><div class="row"><svg><use href="#t-fillet"/></svg><span class="current">EdgeFillet.2</span></div></li>
                  </ul>
                </li>
              </ul>
            </li>
            <li><div class="row"><svg><use href="#t-pub"/></svg><span class="selected">Publication</span></div>
              <ul><li><div class="row"><svg viewBox="0 0 18 18"><path d="M2 2h10l3 3v11H2z" fill="#fff" stroke="#9fdbe5"/><text class="p-letter" x="4" y="14">P</text></svg><span>Right</span></div></li></ul>
            </li>
          </ul>
          <svg class="compass" viewBox="1120 67 60 77">
            <g fill="#20205a" stroke="#d3d0f3" stroke-width="1.500">
              <path d="M1158 81Q1138 92 1134 110L1151 107 1173 118Q1178 91 1158 81z"/><path d="M1125 124L1138 121H1150L1166 132 1162 137 1143 135 1128 130z"/>
              <path d="M1159 78L1146 127" fill="none"/></g>
            <path fill="#cfccd9" d="M1158 72h5v5h-5z"/><path fill="#c50d2c" d="M1145 123l2 3 3 2-3 2-2 3-2-3-3-1 3-2z"/>
            <text x="1136" y="115">y</text><text x="1172" y="121">x</text>
          </svg>
          <section class="dialog" role="dialog" aria-label="Updating">
            <header><h3>Updating ...</h3><button class="dlg-close" aria-label="Close"><svg><use href="#close"/></svg></button></header>
            <div class="dlg-body">
              <div class="dlg-head"><svg viewBox="0 0 12 12"><circle cx="6" cy="6" r="4.500" fill="none" stroke="#222" stroke-width="1.500" stroke-dasharray="12 2"/><path d="M3 5q2-3 4 0t3 2M3 8q2 2 4-1" stroke="#222" fill="none"/></svg><span>Left</span></div>
              <p class="message">'Symmetry.1' updated.</p>
              <progress value="50" max="100" aria-label="Update progress">50%</progress>
              <dl><div><dt>Status :</dt><dd>50% completed</dd></div><div><dt>Estimated time remaining :</dt><dd>0sec</dd></div></dl>
              <button class="cancel">Cancel</button>
            </div>
          </section>
        </div>
      </section>
    </div>

    <div class="sidebar" role="toolbar" aria-label="Part design">
      <i class="hsep h5"></i>
      <button class="tool" aria-label="Workbench"><svg><use href="#gdot"/></svg></button>
      <i class="hsep h12"></i>
      <button class="tool" aria-label="Select"><svg><use href="#cursor"/></svg></button>
      <i class="hsep h12"></i>
      <button class="tool" aria-label="Sketcher"><svg><use href="#sketch"/></svg></button>
      <i class="hsep h12"></i>
      <button class="tool" aria-label="Pad"><svg><use href="#pad"/></svg></button><button class="tool" aria-label="Pocket"><svg><use href="#pocket"/></svg></button><button class="tool" aria-label="Shaft"><svg><use href="#shaft"/></svg></button><button class="tool" aria-label="Groove"><svg><use href="#groove"/></svg></button><button class="tool" aria-label="Hole"><svg><use href="#hole"/></svg></button><button class="tool" aria-label="Rib"><svg><use href="#rib"/></svg></button><button class="tool" aria-label="Slot"><svg><use href="#slot"/></svg></button><button class="tool" aria-label="Stiffener"><svg><use href="#gcube"/></svg></button><button class="tool" aria-label="Multi-sections solid"><svg><use href="#ycube"/></svg></button><button class="tool" aria-label="Removed solid"><svg><use href="#tcube"/></svg></button>
      <i class="hsep h12"></i>
      <button class="tool" aria-label="Edge fillet"><svg><use href="#fil"/></svg></button><button class="tool" aria-label="Chamfer"><svg><use href="#cham"/></svg></button><button class="tool" aria-label="Draft"><svg><use href="#draft"/></svg></button><button class="tool" aria-label="Shell"><svg><use href="#shell"/></svg></button><button class="tool" aria-label="Thickness"><svg><use href="#thick"/></svg></button><button class="tool" aria-label="Thread"><svg><use href="#thread"/></svg></button><button class="tool" aria-label="Replace face"><svg><use href="#repl"/></svg></button>
      <i class="hsep h12"></i>
      <button class="tool" aria-label="Surface"><svg><use href="#surf"/></svg></button>
      <i class="hsep h12"></i>
      <button class="tool" aria-label="Boolean"><svg><use href="#bool"/></svg></button>
      <i class="hsep h5"></i>
      <button class="tool" aria-label="Mirror"><svg><use href="#balls"/></svg></button><button class="tool" aria-label="Pattern"><svg><use href="#grid"/></svg></button>
      <i class="hsep h5"></i>
      <button class="tool" aria-label="Scaling"><svg><use href="#scale"/></svg></button>
      <i class="hsep h12"></i>
      <button class="tool" aria-label="Constraints"><svg><use href="#boxes"/></svg></button><button class="tool" aria-label="Constraint"><svg><use href="#tbox"/></svg></button>
      <i class="hsep h10"></i>
      <button class="tool" aria-label="Text with leader"><svg><use href="#note"/></svg></button><button class="tool" aria-label="Flag note"><svg><use href="#flag"/></svg></button><button class="tool" aria-label="Stamp"><svg><use href="#stamp"/></svg></button>
      <i class="hsep h12"></i>
      <button class="tool" aria-label="Point"><svg><use href="#point"/></svg></button><button class="tool" aria-label="Line"><svg><use href="#line"/></svg></button><button class="tool" aria-label="Plane"><svg><use href="#plane"/></svg></button>
      <i class="hsep h10"></i>
      <button class="tool" aria-label="Draft analysis"><svg><use href="#rock"/></svg></button><button class="tool" aria-label="Curvature analysis"><svg><use href="#rocko"/></svg></button><button class="tool" aria-label="Tap analysis"><svg><use href="#rock"/></svg></button>
    </div>
  </main>

  <div class="toolbar bottom" role="toolbar" aria-label="Standard">
    <i class="sep s8"></i>
    <button class="tool" aria-label="New"><svg><use href="#page"/></svg></button><button class="tool" aria-label="Open"><svg><use href="#open"/></svg></button><button class="tool" aria-label="Save"><svg><use href="#save"/></svg></button><button class="tool" aria-label="Print"><svg><use href="#print"/></svg></button><button class="tool" aria-label="Cut"><svg><use href="#cut"/></svg></button><button class="tool" aria-label="Copy"><svg><use href="#copy"/></svg></button><button class="tool" aria-label="Paste"><svg><use href="#paste"/></svg></button><button class="tool" aria-label="Undo"><svg><use href="#undo"/></svg></button><button class="tool" aria-label="Redo"><svg><use href="#redo"/></svg></button><button class="tool" aria-label="What's this"><svg><use href="#what"/></svg></button>
    <i class="sep s12"></i>
    <button class="tool" aria-label="Formula"><svg><use href="#fx"/></svg></button><button class="tool" aria-label="Comment"><svg><use href="#msg"/></svg></button><button class="tool" aria-label="Knowledge"><svg><use href="#bulb"/></svg></button><button class="tool wide" aria-label="Design table"><svg><use href="#grid"/></svg></button><button class="tool wide" aria-label="Lock"><svg><use href="#lock"/></svg></button><button class="tool wide" aria-label="Equivalent dimensions"><svg><use href="#law"/></svg></button>
    <i class="sep s14"></i>
    <button class="tool" aria-label="Fly mode"><svg><use href="#fly"/></svg></button><button class="tool" aria-label="Fit all in"><svg><use href="#fit"/></svg></button><button class="tool" aria-label="Pan"><svg><use href="#pan"/></svg></button><button class="tool" aria-label="Rotate view"><svg><use href="#rot"/></svg></button><button class="tool" aria-label="Zoom in"><svg><use href="#zin"/></svg></button><button class="tool" aria-label="Zoom out"><svg><use href="#zout"/></svg></button><button class="tool" aria-label="Normal view"><svg><use href="#norm"/></svg></button><button class="tool" aria-label="Multi view"><svg><use href="#multi"/></svg></button><button class="tool wide" aria-label="Isometric view"><svg><use href="#cube"/></svg></button><button class="tool" aria-label="View mode"><svg><use href="#cyld"/></svg></button><button class="tool" aria-label="Hide/Show"><svg><use href="#hide"/></svg></button><button class="tool" aria-label="Swap visible space"><svg><use href="#hide"/></svg></button>
    <i class="sep s10"></i>
    <button class="tool" aria-label="Apply material"><svg><use href="#cam"/></svg></button>
    <i class="sep s12"></i>
    <button class="tool" aria-label="Measure between"><svg><use href="#meas"/></svg></button><button class="tool" aria-label="Measure item"><svg><use href="#horn"/></svg></button><button class="tool" aria-label="Measure inertia"><svg><use href="#man"/></svg></button>
    <i class="sep s8"></i>
    <button class="tool wide" aria-label="Update"><svg><use href="#hour"/></svg></button><button class="tool wide" aria-label="Manual update"><svg><use href="#hand"/></svg></button><button class="tool" aria-label="Axis system"><svg><use href="#axis"/></svg></button><button class="tool" aria-label="Mean dimensions"><svg><use href="#bars"/></svg></button><button class="tool" aria-label="Historical graph"><svg><use href="#gbox"/></svg></button><button class="tool" aria-label="Scan"><svg><use href="#branch"/></svg></button><button class="tool wide" aria-label="Open catalog"><svg><use href="#tree"/></svg></button><button class="tool wide" aria-label="Insert body"><svg><use href="#body"/></svg></button>
    <span class="combo body-combo"><select aria-label="Current body"><option>Left</option></select></span>
    <i class="sep s12"></i>
    <button class="tool wide" aria-label="Only current body"><svg><use href="#block"/></svg></button><button class="tool wide" aria-label="Catalog"><svg><use href="#web"/></svg></button><button class="tool" aria-label="Analysis"><svg><use href="#star"/></svg></button>
    <i class="sep s12"></i>
    <button class="tool" aria-label="Render"><svg><use href="#mug"/></svg></button>
    <i class="sep s12"></i>
    <button class="tool" aria-label="Insert"><svg><use href="#coil"/></svg></button><button class="tool wide" aria-label="Insert in new body"><svg><use href="#coil"/></svg></button>
    <svg class="logo" viewBox="0 0 32 23" role="img" aria-label="DS CATIA"><path d="M8 1q5-2 5 1l-4 2q5 0 1 3" fill="none" stroke="#d84a4f" stroke-width="1.500"/><text class="logo-d" x="1" y="15">D</text><text class="logo-s" x="10" y="15">S</text><text class="logo-n" x="6" y="21">CATIA</text></svg>
  </div>

  <footer class="status">
    <label for="cmd">c:Update</label><input id="cmd" type="text">
    <button aria-label="Power input"><svg viewBox="0 0 12 10"><path d="M2 2h7v5H2zM10 3v5H5" fill="none" stroke="#8c8ca2"/></svg></button><button aria-label="Keyboard"><svg viewBox="0 0 12 10"><path d="M2 2h8v6H2zM4 5h4" fill="none" stroke="#9a9aac"/></svg></button>
  </footer>
</div>
</body>
</html>
```

FILE: styles.css
```css
* { box-sizing: border-box; }
body { margin: 0; background: #000; font-family: "Liberation Sans", Arial, sans-serif; font-size: 7px; line-height: 8px; color: #22222c; }
button { border: 0; margin: 0; padding: 0; background: none; font: inherit; color: inherit; }
h1, h2, h3, p, ul, dl, dd { margin: 0; padding: 0; font-size: inherit; font-weight: normal; }
ul { list-style: none; }
svg { display: block; }
.defs { position: absolute; width: 0; height: 0; }

.app { display: flex; flex-direction: column; height: 100vh; margin: 0 42px; background: #d4d3e9; }

/* Title bars */
.titlebar { display: flex; align-items: center; gap: 2px; padding: 0 0 0 2px; height: 13px; flex: none; background: linear-gradient(90deg, #7e7e7c, #969692 50%, #c2c1b9); color: #e0e0dc; }
.main-title { height: 11px; padding: 0 1px 0 4px; background: linear-gradient(90deg, #808082, #8f8f8f 50%, #b9b8b4); }
.app-icon { width: 9px; height: 9px; }
.winbuttons { display: flex; margin-left: auto; }
.winbuttons button, .dlg-close { width: 11px; height: 10px; background: #d8d5cc; border: 1px solid; border-color: #fff #55554f #55554f #fff; }
.winbuttons svg, .dlg-close svg { width: 8px; height: 8px; }

/* Menus */
.menubar { display: flex; height: 12px; flex: none; padding-left: 2px; background: #d4d1e8; }
.menubar button { padding: 0 6px; }
.menubar .active { padding-left: 1px; background: #fbe3b6; }
.menubar u { text-decoration-thickness: 1px; }

/* Toolbars */
.toolbar { display: flex; align-items: center; flex: none; }
.top { height: 25px; padding-bottom: 4px; background: linear-gradient(#fff 0, #f1f1fb 3px, #d3d2ea 14px, #c9c8e2 21px, #b6b5c8 22px, #6c6c78 24px); }
.bottom { height: 23px; background: linear-gradient(#fff 0, #fff 2px, #dfdff0 5px, #d0cfe6 16px, #c0c0d4 21px, #77788a 22px); }
.tool { flex: none; width: 14px; height: 14px; padding: 1px; }
.tool.wide { width: 16px; padding: 1px 2px; }
.tool svg { width: 12px; height: 12px; overflow: visible; }
.tool.wide svg { width: 13px; height: 13px; }
.sep { align-self: stretch; position: relative; flex: none; }
.sep::before { content: ""; position: absolute; left: 50%; top: 4px; height: 11px; border-left: 1px solid #a8a8b8; border-right: 1px solid #fff; }
.s8 { width: 8px; }
.s10 { width: 10px; }
.s12 { width: 12px; }
.s14 { width: 14px; }
.combos { display: flex; gap: 3px; padding-left: 1px; }
.combo { position: relative; display: flex; height: 13px; }
.combo select { appearance: none; width: 100%; height: 100%; padding: 0 0 0 2px; border: 1px solid; border-color: #77778a #e8e8f0 #e8e8f0 #77778a; border-radius: 0; background: #fff; font: inherit; color: #111; overflow: hidden; }
.combo select:disabled { background: #cfcdd4; color: #a9a8ae; opacity: 1; }
.combo::after { content: "▼"; position: absolute; right: 1px; top: 1px; bottom: 1px; width: 9px; background: #d6d4d2; border: 1px solid; border-color: #f5f5f5 #77777f #77777f #f5f5f5; font: 5px/9px "DejaVu Sans", sans-serif; text-align: center; color: #111; pointer-events: none; }
.w36 { width: 36px; }
.w22 { width: 22px; }
.body-combo { width: 92px; margin-left: 2px; }
.logo { width: 32px; height: 23px; margin-left: auto; overflow: visible; }
.logo text { font-style: italic; font-weight: bold; }
.logo-d { font-size: 12px; fill: #3b4393; }
.logo-s { font-size: 12px; fill: #dcba55; }
.logo-n { font-size: 6px; fill: #343c70; }

/* Workspace */
.workspace { display: flex; flex: 1; min-height: 0; }
.windows { display: flex; flex: 1; gap: 3px; padding: 1px 2px 1px 3px; background: #8b8b93; }
.window { display: flex; flex-direction: column; flex: 1; min-width: 0; padding: 0 2px 2px; background: #d6d3ca; border-bottom: 1px solid #f4f4f4; }
.canvas { position: relative; flex: 1; min-height: 0; overflow: hidden; background: linear-gradient(#323265 0, #3b3a6d 35%, #45437a 66%, #69698f 80%, #9897b6 93%, #a8a7c6); }
.model { position: absolute; left: 0; top: 0; width: 100%; height: 100%; }
.compass { position: absolute; right: 30px; top: 5px; width: 60px; height: 77px; }
.compass text { font-size: 8px; fill: #a8a58a; }
.triad { position: absolute; right: 1px; bottom: 8px; width: 30px; height: 30px; }

/* Specification tree */
.tree { position: relative; padding-top: 1px; font: 12px/21px "DejaVu Sans Condensed", Tahoma, sans-serif; color: #fff; }
.tree ul { padding-left: 15px; }
.tree li { position: relative; }
.row { display: flex; align-items: center; gap: 2px; height: 21px; white-space: nowrap; }
.row svg { position: relative; width: 18px; height: 18px; flex: none; }
.row span { line-height: 16px; }
.tree li li::before { content: ""; position: absolute; left: -9px; top: -4px; bottom: 0; width: 2px; background: #d9d8e8; }
.tree li li:last-child::before { bottom: auto; height: 16px; }
.tree li li::after { content: ""; position: absolute; left: -9px; top: 10px; width: 10px; height: 2px; background: #c9c8dc; }
.current { text-decoration: underline; text-decoration-thickness: 1px; text-underline-offset: 2px; }
.selected { background: #f58220; }
.exp { position: absolute; z-index: 1; left: -13px; top: 6px; width: 9px; height: 9px; border-radius: 50%; background: linear-gradient(#111, #111) center / 7px 2px no-repeat, #85858a; }
.exp.plus { background: linear-gradient(#000, #000) center / 7px 3px no-repeat, linear-gradient(#000, #000) center / 3px 7px no-repeat, #85858a; }
.p-letter { font: italic bold 13px "Liberation Serif", serif; fill: #111; }

/* Progress dialog */
.dialog { position: absolute; right: 2px; bottom: 2px; width: 245px; border: 2px solid; border-color: #e6e4df #66645f #66645f #e6e4df; background: #fbe5bf; }
.dialog header { display: flex; align-items: center; justify-content: space-between; height: 11px; padding: 0 1px; background: linear-gradient(90deg, #0a246a, #2e5296 45%, #a6caf0); color: #fff; }
.dialog h3 { font-weight: bold; }
.dlg-body { padding: 4px 12px 5px; background: radial-gradient(circle at 10px 100%, #47474c 0, #5b6068 9px, #9fc6df 15px, transparent 20px), radial-gradient(circle at 20px 84%, #f9bc58 0, transparent 16px), #fbe5bf; }
.dlg-head { position: relative; display: flex; align-items: center; justify-content: center; height: 11px; }
.dlg-head svg { position: absolute; left: 0; top: 0; width: 12px; height: 12px; }
.dlg-head span { margin-right: 50px; }
.message { margin-top: 1px; text-align: right; }
.dialog progress { display: block; appearance: none; width: 100%; height: 8px; margin: 0 0 3px; border: 1px solid; border-color: #77706b #f3ead8 #f3ead8 #77706b; background: #d9ccc8; }
.dialog progress::-webkit-progress-bar { background: #d9ccc8; }
.dialog progress::-webkit-progress-value { background: #10246b; }
.dialog dl div { display: flex; justify-content: space-between; }
.cancel { display: block; width: 34px; height: 12px; margin: 0 auto; border: 2px solid; border-color: #9a9cae #3f4257 #3f4257 #9a9cae; background: #d5d3e3; line-height: 8px; }

/* Right-hand toolbar */
.sidebar { display: flex; flex-direction: column; flex: none; width: 24px; padding-left: 4px; background: linear-gradient(90deg, #fff, #dcdbee 5px, #d0cfe6 18px, #c5c4dc); }
.hsep { position: relative; flex: none; }
.hsep::before { content: ""; position: absolute; left: 0; top: 50%; width: 10px; border-top: 1px solid #a8a8b8; border-bottom: 1px solid #fff; }
.h5 { height: 5px; }
.h10 { height: 10px; }
.h12 { height: 12px; }

/* Status bar */
.status { display: flex; align-items: center; justify-content: flex-end; flex: none; height: 15px; background: #d0cfe5; }
.status label { margin-right: 3px; }
.status input { width: 186px; height: 12px; border: 1px solid; border-color: #66667a #eee #eee #66667a; background: #fff; font: inherit; }
.status button { display: flex; align-items: center; justify-content: center; width: 21px; height: 14px; border: 1px solid; border-color: #e9e9f4 #9999ad #9999ad #e9e9f4; }
.status svg { width: 12px; height: 10px; }
```
